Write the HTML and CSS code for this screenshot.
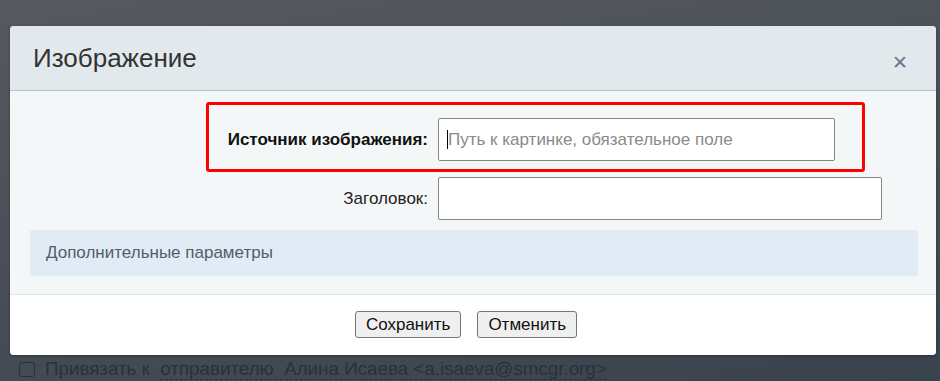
FILE: index.html
```html
<!DOCTYPE html>
<html lang="ru">
<head>
<meta charset="utf-8">
<title>Изображение</title>
<link rel="stylesheet" href="styles.css">
</head>
<body>
<div class="dialog">
  <div class="dialog-head">
    <span class="dialog-title">Изображение</span>
    <span class="dialog-close">&#x2715;</span>
  </div>
  <div class="dialog-body">
    <div class="row row-main">
      <label class="label label-bold">Источник изображения:</label>
      <span class="field field-caret"><input class="input input-src" type="text" placeholder="Путь к картинке, обязательное поле"></span>
      <span class="highlight"></span>
    </div>
    <div class="row">
      <label class="label">Заголовок:</label>
      <span class="field"><input class="input input-title" type="text"></span>
    </div>
    <div class="extra">Дополнительные параметры</div>
  </div>
  <div class="dialog-foot">
    <button class="btn" type="button">Сохранить</button>
    <button class="btn" type="button">Отменить</button>
  </div>
</div>
<div class="under">
  <span class="under-box"></span>
  <span class="under-text">Привязать к&nbsp; <span class="dotted">отправителю&nbsp; Алина Исаева &lt;a.isaeva@smcgr.org&gt;</span></span>
</div>
</body>
</html>
```
FILE: styles.css
```css
html, body {
  margin: 0;
  padding: 0;
  height: 100%;
}
body {
  width: 940px;
  height: 381px;
  overflow: hidden;
  background: linear-gradient(170deg, #56595e 0%, #4b5058 45%, #39434d 100%);
  font-family: "Liberation Sans", Arial, sans-serif;
  padding-top: 26px;
  box-sizing: border-box;
}
.dialog {
  margin-left: 10px;
  width: 926px;
  height: 329px;
  border-radius: 4px;
  overflow: hidden;
  background: #fff;
  display: flex;
  flex-direction: column;
  box-shadow: 0 1px 3px rgba(0,0,0,0.3);
}
.dialog-head {
  height: 64px;
  background: #e2e9ed;
  border-bottom: 1px solid #bfc3c6;
  display: flex;
  align-items: center;
  justify-content: space-between;
  padding: 0 28px 0 23px;
  flex: none;
}
.dialog-title {
  font-size: 26px;
  color: #333;
  margin-top: 0;
}
.dialog-close {
  font-size: 19px;
  font-weight: bold;
  color: #6a7891;
  margin-top: 8px;
  font-family: "DejaVu Sans", sans-serif;
}
.dialog-body {
  background: #f4f7f8;
  border-bottom: 1px solid #dde7eb;
  padding: 27px 18px 19px 20px;
  flex: none;
  height: 157px;
}
.row {
  display: flex;
  align-items: center;
  position: relative;
}
.row + .row {
  margin-top: 16px;
}
.label {
  width: 398px;
  text-align: right;
  padding-right: 10px;
  font-size: 17px;
  color: #222;
  flex: none;
}
.label-bold {
  font-weight: bold;
  color: #111;
}
.field {
  position: relative;
  display: block;
}
.input {
  display: block;
  box-sizing: border-box;
  height: 43px;
  border: 1px solid #858585;
  border-radius: 2px;
  background: #fff;
  font-family: "Liberation Sans", Arial, sans-serif;
  font-size: 17px;
  padding: 0 9px;
  outline: none;
  margin: 0;
}
.input::placeholder {
  color: #8a8a8a;
}
.input-src {
  width: 397px;
}
.input-title {
  width: 444px;
}
.field-caret::after {
  content: "";
  position: absolute;
  left: 9px;
  top: 12px;
  width: 1px;
  height: 19px;
  background: #000;
}
.highlight {
  position: absolute;
  left: 176px;
  top: -16px;
  width: 653px;
  height: 64px;
  border: 3px solid #ff0000;
  border-radius: 3px;
  pointer-events: none;
}
.extra {
  margin-top: 10px;
  height: 46px;
  background: #e0ebf6;
  border-radius: 2px;
  display: flex;
  align-items: center;
  padding-left: 16px;
  font-size: 17px;
  color: #545c69;
}
.dialog-foot {
  flex: 1;
  display: flex;
  justify-content: center;
  align-items: flex-start;
  gap: 16px;
  padding-top: 16px;
  padding-right: 14px;
  background: #fff;
}
.btn {
  height: 27px;
  box-sizing: border-box;
  border: 1px solid #767676;
  border-radius: 3px;
  background: #efefef;
  font-family: "Liberation Sans", Arial, sans-serif;
  font-size: 17px;
  color: #111;
  padding: 0 10px;
  margin: 0;
}
.under {
  display: flex;
  align-items: center;
  padding-left: 19px;
  height: 24px;
  margin-top: 2px;
}
.under-box {
  width: 14px;
  height: 13px;
  border: 1px solid #26313b;
  border-radius: 3px;
  margin-right: 10px;
  flex: none;
}
.under-text {
  font-size: 18.8px;
  color: #27323d;
  white-space: nowrap;
}
.dotted {
  border-bottom: 1px dashed #27323d;
}
```
